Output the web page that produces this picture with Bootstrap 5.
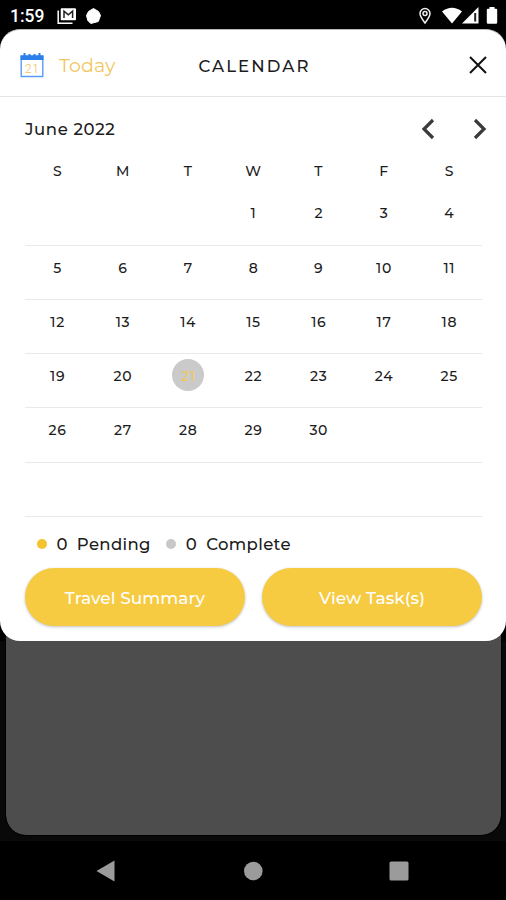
<!DOCTYPE html>
<html lang="en">
<head>
<meta charset="utf-8">
<meta name="viewport" content="width=device-width, initial-scale=1">
<title>Calendar</title>
<link href="https://cdn.jsdelivr.net/npm/bootstrap@5.3.0/dist/css/bootstrap.min.css" rel="stylesheet">
<style>
html, body { height: 900px; overflow: hidden; }
body { background: #000; color: #1c1c1c; font-family: Montserrat, Inter, "Liberation Sans", sans-serif; font-weight: 500; }
svg { display: block; flex: none; }
.status { height: 29px; padding: 2px 8px 0 10px; font: 500 17.5px Roboto, sans-serif; color: #fff; }
.time { width: 46.5px; }
.gap-mail { margin-right: 8px; }
.gap-pin { margin-right: 10px; }
.gap-signal { margin-right: 7px; }
.sheet { height: 612px; border-radius: 20px; z-index: 1; border-top: 1px solid #b8b8b8; }
.sheet-head { height: 67px; border-bottom: 1px solid #e4e4e4; padding: 5px 18px 0 20px; display: grid; grid-template-columns: 1fr auto 1fr; }
.today { color: #f1c75f; font-size: 19px; font-weight: 400; letter-spacing: .1px; margin-left: 15px; padding-top: 2px; }
.sheet-title { font-size: 16.5px; font-weight: 500; letter-spacing: 2.1px; line-height: 20px; margin-left: 1px; }
.cal { margin: 0 24px 0 25px; }
.month { height: 64px; font-size: 16.5px; letter-spacing: .62px; margin-right: -6px; }
.chev-next { margin-left: 36px; }
.week { display: grid; grid-template-columns: repeat(7, 1fr); text-align: center; font-size: 14px; letter-spacing: .7px; }
.week-names { height: 30.3px; line-height: 21px; }
.week-days { height: 54.25px; border-bottom: 1.5px solid #e9e9e9; padding-top: 6px; line-height: 32px; }
.picked { display: block; width: 32px; height: 32px; margin: -1px auto 0; line-height: 34px; background: #cacaca; color: #f1c75a; }
.legend { height: 51px; padding: 4px 0 0 12px; font-size: 16.5px; letter-spacing: .35px; }
.dot { width: 10px; height: 10px; background: #f5c32f; }
.dot-done { background: #c8c8c8; margin-left: 15.5px; }
.count { margin: 0 9px 0 9.5px; }
.actions { gap: 17px; }
.btn-task { --bs-btn-bg: #f6cb42; --bs-btn-color: #fff; --bs-btn-border-width: 0; --bs-btn-font-weight: 500; height: 58.5px; padding-top: 9px; font-size: 17px; letter-spacing: .05px; box-shadow: 0 1px 3px rgba(0,0,0,.25); }
/* flow-root keeps the panel's negative margin from collapsing into its parent */
.under { display: flow-root; height: 200px; background: #090909; padding: 0 5px 6px 6px; }
.under-panel { height: 226px; margin-top: -32px; background: #4d4d4d; border-radius: 0 0 20px 20px; outline: 1px solid #000; }
.sysnav { height: 59px; padding: 0 97px 0 96px; }
</style>
<script src="https://cdn.jsdelivr.net/npm/bootstrap@5.3.0/dist/js/bootstrap.bundle.min.js"></script>
</head>
<body>
<div class="status d-flex align-items-center">
  <span class="time">1:59</span>
  <svg class="gap-mail" width="20" height="18" viewBox="0 0 20 18" fill="none"><path d="M1.200 3.500v12.800H15.500" stroke="#fff" stroke-width="1.500"/><path d="M4.500 1.200h13.500q1 0 1 1v10q0 1-1 1H4.500q-.8 0-.8-1v-10q0-1 .8-1z" fill="#fff"/><path d="M7 11V4.200l4.300 3.600 4.300-3.600V11" stroke="#222" stroke-width="1.500"/></svg>
  <svg width="17" height="18" viewBox="0 0 17 18"><path d="M8.500 1.500L13.500 4.500l2 4-2.200 6-7.500 2-3-3L1.500 8.500l2-4z" fill="#fff" stroke="#fff" stroke-linejoin="round"/></svg>
  <svg class="ms-auto gap-pin" width="14" height="18" viewBox="0 0 14 18" fill="none" stroke="#eee" stroke-width="1.500"><path d="M7 16C4.500 12.500 2 9.800 2 6.500a5 5 0 0 1 10 0C12 9.800 9.500 12.500 7 16z"/><circle cx="7" cy="6.500" r="2"/></svg>
  <svg width="20" height="17" viewBox="0 0 20 17"><path d="M0 4.500Q10-3 20 4.500L10 16.500z" fill="#fff"/></svg>
  <svg class="gap-signal" width="17" height="17" viewBox="0 0 17 17"><path d="M0 16.500L16.500 0v16.500z" fill="#fff"/><path d="M13.200 6v8.500" stroke="#222" stroke-width="2"/></svg>
  <svg width="12" height="17" viewBox="0 0 12 17"><path d="M3.500 0h5v1.800H10q1.200 0 1.200 1.200v12.500q0 1.200-1.200 1.200H2Q.8 16.700.8 15.500V3Q.8 1.800 2 1.800h1.500z" fill="#fff"/></svg>
</div>

<main class="sheet bg-white position-relative">
  <header class="sheet-head align-items-center">
    <div class="d-flex align-items-center">
      <svg width="24" height="26" viewBox="0 0 24 26"><path d="M1.200 3h21.600v20.500H1.200z" fill="#fff" stroke="#5b9bf3" stroke-width="1.400"/><path d="M.5 2.500h23V7H.5z" fill="#2b80ea"/><path d="M4.500 0v4M9.500 1v3M14.500 1v3M19.500 0v4" stroke="#2b80ea" stroke-width="2"/><text x="12" y="19.500" text-anchor="middle" font-family="Roboto, sans-serif" font-size="12.500" letter-spacing=".4" font-weight="300" fill="#eebf62">21</text></svg>
      <span class="today">Today</span>
    </div>
    <h1 class="sheet-title mb-0">CALENDAR</h1>
    <svg class="ms-auto" width="20" height="20" viewBox="0 0 20 20"><path d="M2 1l16 16M18 1L2 17" stroke="#111" stroke-width="2"/></svg>
  </header>

  <div class="cal">
    <div class="month d-flex align-items-center">
      <span>June 2022</span>
      <svg class="ms-auto" width="16" height="22" viewBox="0 0 16 22"><path d="M13 2L4 11l9 9" fill="none" stroke="#3b3b3b" stroke-width="3.200"/></svg>
      <svg class="chev-next" width="16" height="22" viewBox="0 0 16 22"><path d="M3 2l9 9-9 9" fill="none" stroke="#3b3b3b" stroke-width="3.200"/></svg>
    </div>
    <div class="week week-names"><span>S</span><span>M</span><span>T</span><span>W</span><span>T</span><span>F</span><span>S</span></div>
    <div class="week week-days"><span></span><span></span><span></span><span>1</span><span>2</span><span>3</span><span>4</span></div>
    <div class="week week-days"><span>5</span><span>6</span><span>7</span><span>8</span><span>9</span><span>10</span><span>11</span></div>
    <div class="week week-days"><span>12</span><span>13</span><span>14</span><span>15</span><span>16</span><span>17</span><span>18</span></div>
    <div class="week week-days"><span>19</span><span>20</span><span class="picked rounded-circle">21</span><span>22</span><span>23</span><span>24</span><span>25</span></div>
    <div class="week week-days"><span>26</span><span>27</span><span>28</span><span>29</span><span>30</span></div>
    <div class="week week-days"></div>
    <div class="legend d-flex align-items-center">
      <i class="dot rounded-circle"></i><span class="count">0</span><span>Pending</span>
      <i class="dot dot-done rounded-circle"></i><span class="count">0</span><span>Complete</span>
    </div>
    <div class="actions d-flex">
      <button type="button" class="btn btn-task rounded-pill flex-fill w-50">Travel Summary</button>
      <button type="button" class="btn btn-task rounded-pill flex-fill w-50">View Task(s)</button>
    </div>
  </div>
</main>

<div class="under"><div class="under-panel"></div></div>

<nav class="sysnav d-flex align-items-center justify-content-between">
  <svg width="19" height="22" viewBox="0 0 19 22"><path d="M.5 11L18.500.5v21z" fill="#9b9b9b"/></svg>
  <svg width="22" height="20" viewBox="0 0 22 20"><circle cx="12.300" cy="10" r="9.300" fill="#9b9b9b"/></svg>
  <svg width="20" height="20" viewBox="0 0 20 20"><rect x=".5" y=".5" width="19" height="19" rx="1.500" fill="#9b9b9b"/></svg>
</nav>
</body>
</html>
